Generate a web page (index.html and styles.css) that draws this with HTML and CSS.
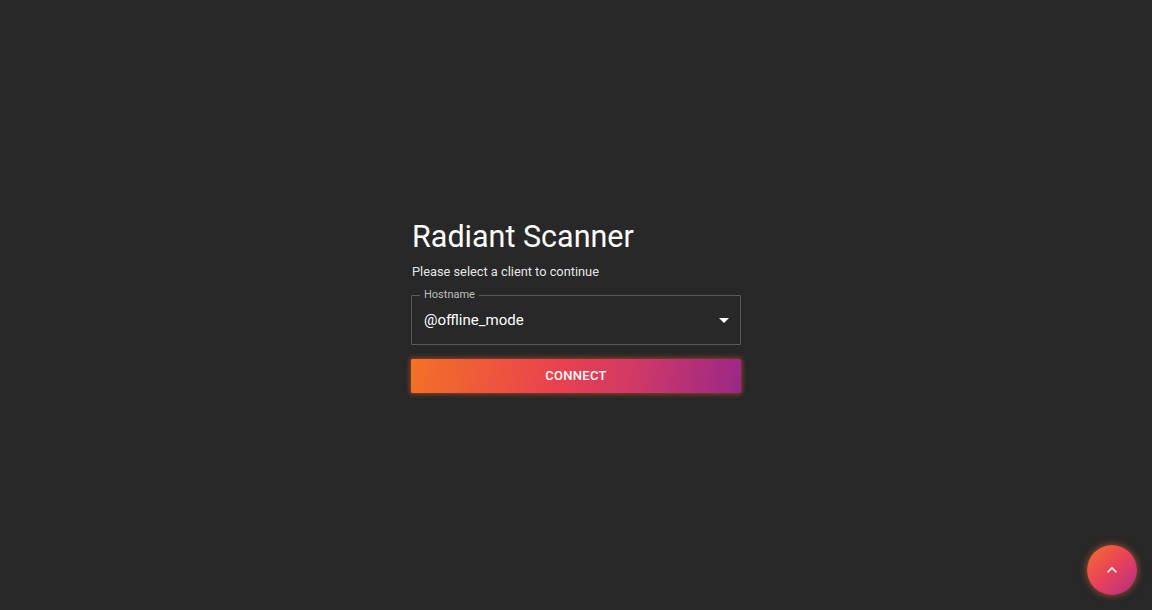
FILE: index.html
```html
<!DOCTYPE html>
<html>
<head>
<meta charset="utf-8">
<link rel="stylesheet" href="styles.css">
</head>
<body>
<main class="page">
  <section class="panel">
    <h1 class="title">Radiant Scanner</h1>
    <p class="subtitle">Please select a client to continue</p>
    <div class="field">
      <span class="field-label">Hostname</span>
      <span class="field-value">@offline_mode</span>
      <svg class="caret" width="24" height="24" viewBox="0 0 24 24"><path d="M7 10l5 5 5-5z" fill="#fff"/></svg>
    </div>
    <button class="connect">CONNECT</button>
  </section>
</main>
<button class="fab" aria-label="Scroll up">
  <svg width="24" height="24" viewBox="0 0 24 24"><path d="M7.41 15.41 12 10.83l4.59 4.58L18 14l-6-6-6 6z" fill="#fff"/></svg>
</button>
</body>
</html>
```
FILE: styles.css
```css
html, body {
  margin: 0;
  height: 100%;
  background: #282828;
  font-family: Roboto, "Noto Sans", sans-serif;
  color: #fff;
}
.page {
  height: 100%;
  display: flex;
  align-items: center;
  justify-content: center;
}
.panel {
  width: 330px;
  display: flex;
  flex-direction: column;
  margin-top: 1px;
}
.title {
  margin: 0;
  font-size: 30.5px;
  font-weight: 400;
  line-height: 1.2;
  letter-spacing: 0;
  padding: 1px 0 0 1px;
}
.subtitle {
  margin: 7px 0 0 1px;
  font-size: 12.8px;
  line-height: 1.4;
  color: rgba(255,255,255,0.9);
}
.field {
  position: relative;
  margin-top: 14px;
  height: 48px;
  border: 1px solid rgba(255,255,255,0.23);
  border-radius: 1px;
  display: flex;
  align-items: center;
  padding: 0 12px;
}
.field-label {
  position: absolute;
  top: -7px;
  left: 8px;
  padding: 0 4px;
  background: #282828;
  font-size: 11px;
  line-height: 12px;
  color: rgba(255,255,255,0.7);
}
.field-value {
  flex: 1;
  font-size: 15px;
}
.caret {
  margin-right: -8px;
}
.connect {
  margin-top: 14px;
  height: 34px;
  border: 0;
  border-radius: 1px;
  background: linear-gradient(100deg, #f37126 0%, #e9414f 45%, #d43a63 65%, #9a2888 100%);
  color: #fff;
  font-family: Roboto, sans-serif;
  font-size: 13px;
  font-weight: 500;
  letter-spacing: 0.3px;
  box-shadow: 0 0 5px 1px rgba(243, 90, 40, 0.55);
  cursor: pointer;
}
.fab {
  position: fixed;
  right: 15px;
  bottom: 15px;
  width: 50px;
  height: 50px;
  border-radius: 50%;
  border: 0;
  background: linear-gradient(135deg, #f3702c 0%, #e9415a 50%, #b02e84 100%);
  box-shadow: 0 0 6px 1px rgba(243, 110, 50, 0.5);
  display: flex;
  align-items: center;
  justify-content: center;
  padding: 0;
}
.fab svg { width: 20px; height: 20px; }
```
